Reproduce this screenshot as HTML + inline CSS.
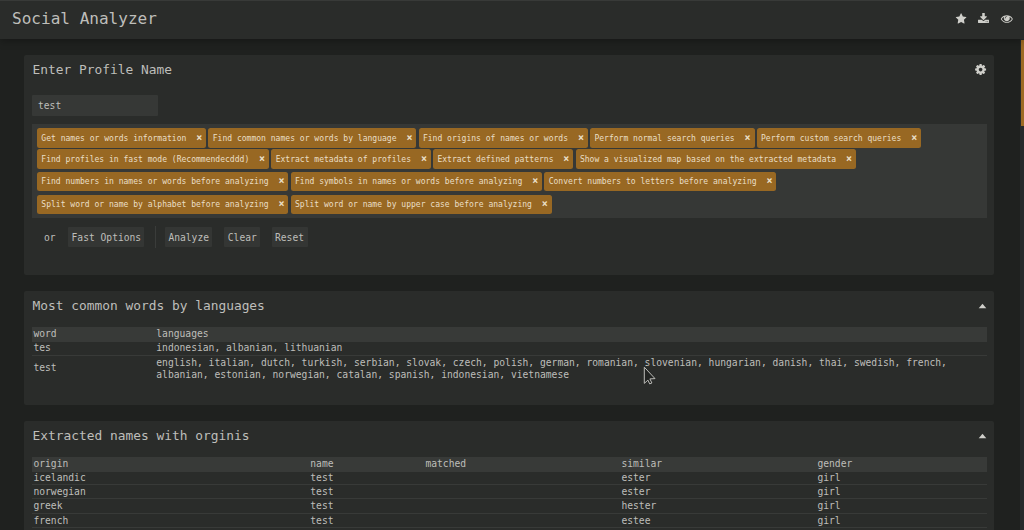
<!DOCTYPE html>
<html lang="en">
<head>
<meta charset="utf-8">
<title>Social Analyzer</title>
<style>
*{box-sizing:border-box;margin:0;padding:0}
html,body{width:1024px;height:530px;overflow:hidden}
body{background:#1f211f;color:#bebeba;font-family:"DejaVu Sans Mono","Liberation Mono",monospace;font-size:16px;position:relative}
#header{position:absolute;left:0;top:0;width:1024px;height:39px;background:#2a2c2a;border-top:1px solid #383a38;box-shadow:0 2px 8px rgba(0,0,0,.3);z-index:2}
#header h1{position:absolute;left:12px;top:8px;font-size:16.06px;font-weight:normal;line-height:19px;color:#bebeba;white-space:nowrap}
#header svg{position:absolute;fill:#cfcfca}
#sbtrack{position:absolute;left:1020px;top:39px;width:4px;height:491px;background:#25292b}
#sbthumb{position:absolute;left:1021px;top:40px;width:3px;height:86px;background:#9c6a24}
.panel{position:absolute;left:24px;width:970px;background:#2a2c2a;border-radius:2px}
.panel h2{position:absolute;left:8.6px;top:7px;font-size:12.87px;font-weight:normal;line-height:16px;color:#bebeba;white-space:nowrap}
.panel svg.ico{position:absolute;fill:#cfcfca}
#p1{top:55px;height:220px}
#p2{top:291px;height:114px}
#p3{top:421px;height:120px}
#inp{position:absolute;left:8px;top:39.6px;width:126.4px;height:21.4px;background:#363836;font-size:9.65px;line-height:21px;padding-left:6px;color:#bebeba;border-radius:1px}
#tags{position:absolute;left:8px;top:69.4px;width:954.5px;height:94px;background:#363836}
.row{position:absolute;left:5px;height:19px;white-space:nowrap;font-size:0}
.tag{display:inline-block;vertical-align:top;height:100%;line-height:inherit;background:#986823;color:#eadfc6;font-size:8.04px;padding:0 4px 0 4.3px;margin-right:2.2px;border-radius:2.5px}
.tag i{font-style:normal;font-weight:bold;margin-left:9.9px;font-size:10px;line-height:1px}
#btns{position:absolute;left:0;top:171.6px;height:20px;font-size:9.65px;line-height:21px;white-space:nowrap}
#btns span{position:absolute;top:0;height:20px;color:#bebeba;white-space:nowrap}
#btns .b{background:#343634;text-align:center;border-radius:1px}
#btns .sep{width:1px;background:#3a3c3a;height:22px;top:-1px}
table{position:absolute;left:8px;width:954.5px;border-collapse:separate;border-spacing:0;table-layout:fixed;font-size:9.67px;line-height:11px;color:#bebeba}
th{font-weight:normal;text-align:left;background:#383a38;padding:1.2px 1.4px 0;height:14.45px;vertical-align:top}
td{padding:0.8px 1.4px 0;border-bottom:1px solid #383a38;height:14.4px;vertical-align:top}
tr.first td{height:13.4px}
tr.last td{border-bottom:none}
</style>
</head>
<body>
<div id="header">
<h1>Social Analyzer</h1>
<svg style="left:944px;top:-1px" width="80" height="39" viewBox="0 0 80 39">
<g transform="translate(11.366 13.117) scale(0.0064)"><path d="M1728 647q0 22-26 48l-363 354 86 500q1 7 1 20 0 21-10.500 35.500t-30.500 14.500q-19 0-40-12l-449-236-449 236q-22 12-40 12-21 0-31.500-14.500t-10.500-35.500q0-6 2-20l86-500-364-354q-25-27-25-48 0-37 56-46l502-73 225-455q19-41 49-41t49 41l225 455 502 73q56 9 56 46z"/></g>
<g transform="translate(33.586 12.881) scale(0.0066)"><path d="M1344 1344q0-26-19-45t-45-19-45 19-19 45 19 45 45 19 45-19 19-45zm256 0q0-26-19-45t-45-19-45 19-19 45 19 45 45 19 45-19 19-45zm128-224v320q0 40-28 68t-68 28h-1472q-40 0-68-28t-28-68v-320q0-40 28-68t68-28h465l135 136q58 56 136 56t136-56l136-136h464q40 0 68 28t28 68zm-325-569q17 41-14 70l-448 448q-18 19-45 19t-45-19l-448-448q-31-29-14-70 17-39 59-39h256v-448q0-26 19-45t45-19h256q26 0 45 19t19 45v448h256q42 0 59 39z"/></g>
<g transform="translate(56.851 12.626) scale(0.00664)"><path d="M1664 960q-152-236-381-353 61 104 61 225 0 185-131.500 316.500t-316.500 131.500-316.500-131.500-131.500-316.500q0-121 61-225-229 117-381 353 133 205 333.500 326.500t434.500 121.500 434.500-121.500 333.500-326.500zm-720-384q0-20-14-34t-34-14q-125 0-214.500 89.500t-89.500 214.500q0 20 14 34t34 14 34-14 14-34q0-86 61-147t147-61q20 0 34-14t14-34zm848 384q0 34-20 69-140 230-376.500 368.500t-499.500 138.500-499.500-139-376.500-368q-20-35-20-69t20-69q140-229 376.500-368t499.500-139 499.500 139 376.500 368q20 35 20 69z"/></g>
</svg>
</div>
<div id="sbtrack"></div><div id="sbthumb"></div>

<div class="panel" id="p1">
<h2>Enter Profile Name</h2>
<svg class="ico" style="left:940px;top:0" width="30" height="30" viewBox="0 0 30 30"><g transform="translate(10.185 8.135) scale(0.00716)"><path d="M1152 896q0-106-75-181t-181-75-181 75-75 181 75 181 181 75 181-75 75-181zm512-109v222q0 12-8 23t-20 13l-185 28q-19 54-39 91 35 50 107 138 10 12 10 25t-9 23q-27 37-99 108t-94 71q-12 0-26-9l-138-108q-44 23-91 38-16 136-29 186-7 28-36 28h-222q-14 0-24.500-8.500t-11.500-21.500l-28-184q-49-16-90-37l-141 107q-10 9-25 9-14 0-25-11-126-114-165-168-7-10-7-23 0-12 8-23 15-21 51-66.500t54-70.500q-27-50-41-99l-183-27q-13-2-21-12.500t-8-23.500v-222q0-12 8-23t19-13l186-28q14-46 39-92-40-57-107-138-10-12-10-24 0-10 9-23 26-36 98.500-107.500t94.500-71.500q13 0 26 10l138 107q44-23 91-38 16-136 29-186 7-28 36-28h222q14 0 24.500 8.500t11.500 21.500l28 184q49 16 90 37l142-107q9-9 24-9 13 0 25 10 129 119 165 170 7 8 7 22 0 12-8 23-15 21-51 66.500t-54 70.500q26 50 41 98l183 28q13 2 21 12.500t8 23.500z"/></g></svg>
<div id="inp">test</div>
<div id="tags">
<div class="row" style="top:3.6px;height:20px;line-height:22px"><span class="tag">Get names or words information<i>×</i></span><span class="tag">Find common names or words by language<i>×</i></span><span class="tag">Find origins of names or words<i>×</i></span><span class="tag">Perform normal search queries<i>×</i></span><span class="tag">Perform custom search queries<i>×</i></span></div>
<div class="row" style="top:24.6px;height:20px;line-height:22px"><span class="tag">Find profiles in fast mode (Recommendecddd)<i>×</i></span><span class="tag">Extract metadata of profiles<i>×</i></span><span class="tag">Extract defined patterns<i>×</i></span><span class="tag">Show a visualized map based on the extracted metadata<i>×</i></span></div>
<div class="row" style="top:47.6px;height:19px;line-height:19px"><span class="tag">Find numbers in names or words before analyzing<i>×</i></span><span class="tag">Find symbols in names or words before analyzing<i>×</i></span><span class="tag">Convert numbers to letters before analyzing<i>×</i></span></div>
<div class="row" style="top:70.6px;height:19px;line-height:19px"><span class="tag">Split word or name by alphabet before analyzing<i>×</i></span><span class="tag">Split word or name by upper case before analyzing<i>×</i></span></div>
</div>
<div id="btns">
<span style="left:20px">or</span>
<span class="b" style="left:44.2px;width:76.3px">Fast Options</span>
<span class="sep" style="left:130.6px"></span>
<span class="b" style="left:141px;width:47.4px">Analyze</span>
<span class="b" style="left:200.3px;width:36px">Clear</span>
<span class="b" style="left:247.5px;width:36px">Reset</span>
</div>
</div>

<div class="panel" id="p2">
<h2>Most common words by languages</h2>
<svg class="ico" style="left:940px;top:0" width="30" height="30" viewBox="0 0 30 30"><path d="M14.7 17.15 L18.5 12.85 L22.3 17.15 Z"/></svg>
<table style="top:36.1px">
<colgroup><col style="width:122.9px"><col></colgroup>
<tr><th>word</th><th>languages</th></tr>
<tr class="first"><td style="height:14px">tes</td><td style="height:14px">indonesian, albanian, lithuanian</td></tr>
<tr class="last"><td style="padding-top:6.5px">test</td><td style="line-height:12.2px;padding-top:1.2px">english, italian, dutch, turkish, serbian, slovak, czech, polish, german, romanian, slovenian, hungarian, danish, thai, swedish, french, albanian, estonian, norwegian, catalan, spanish, indonesian, vietnamese</td></tr>
</table>
</div>

<div class="panel" id="p3">
<h2>Extracted names with orginis</h2>
<svg class="ico" style="left:940px;top:0" width="30" height="30" viewBox="0 0 30 30"><path d="M14.7 17.15 L18.5 12.85 L22.3 17.15 Z"/></svg>
<table style="top:36.2px">
<colgroup><col style="width:276.9px"><col style="width:115.1px"><col style="width:196px"><col style="width:196px"><col></colgroup>
<tr><th>origin</th><th>name</th><th>matched</th><th>similar</th><th>gender</th></tr>
<tr class="first"><td>icelandic</td><td>test</td><td></td><td>ester</td><td>girl</td></tr>
<tr><td>norwegian</td><td>test</td><td></td><td>ester</td><td>girl</td></tr>
<tr><td>greek</td><td>test</td><td></td><td>hester</td><td>girl</td></tr>
<tr><td>french</td><td>test</td><td></td><td>estee</td><td>girl</td></tr>
<tr><td>english</td><td>test</td><td></td><td>ester</td><td>girl</td></tr>
</table>
</div>
<svg id="cursor" style="position:absolute;left:643px;top:366px;z-index:5" width="14" height="21" viewBox="0 0 14 21"><path d="M1.3 1.2 L1.3 17.4 L4.9 14.1 L6.7 17.9 L8.9 17.0 L6.9 12.9 L12 12.6 Z" fill="#222422" stroke="#bcbcb8" stroke-width="1" stroke-linejoin="miter"/></svg>
</body>
</html>
